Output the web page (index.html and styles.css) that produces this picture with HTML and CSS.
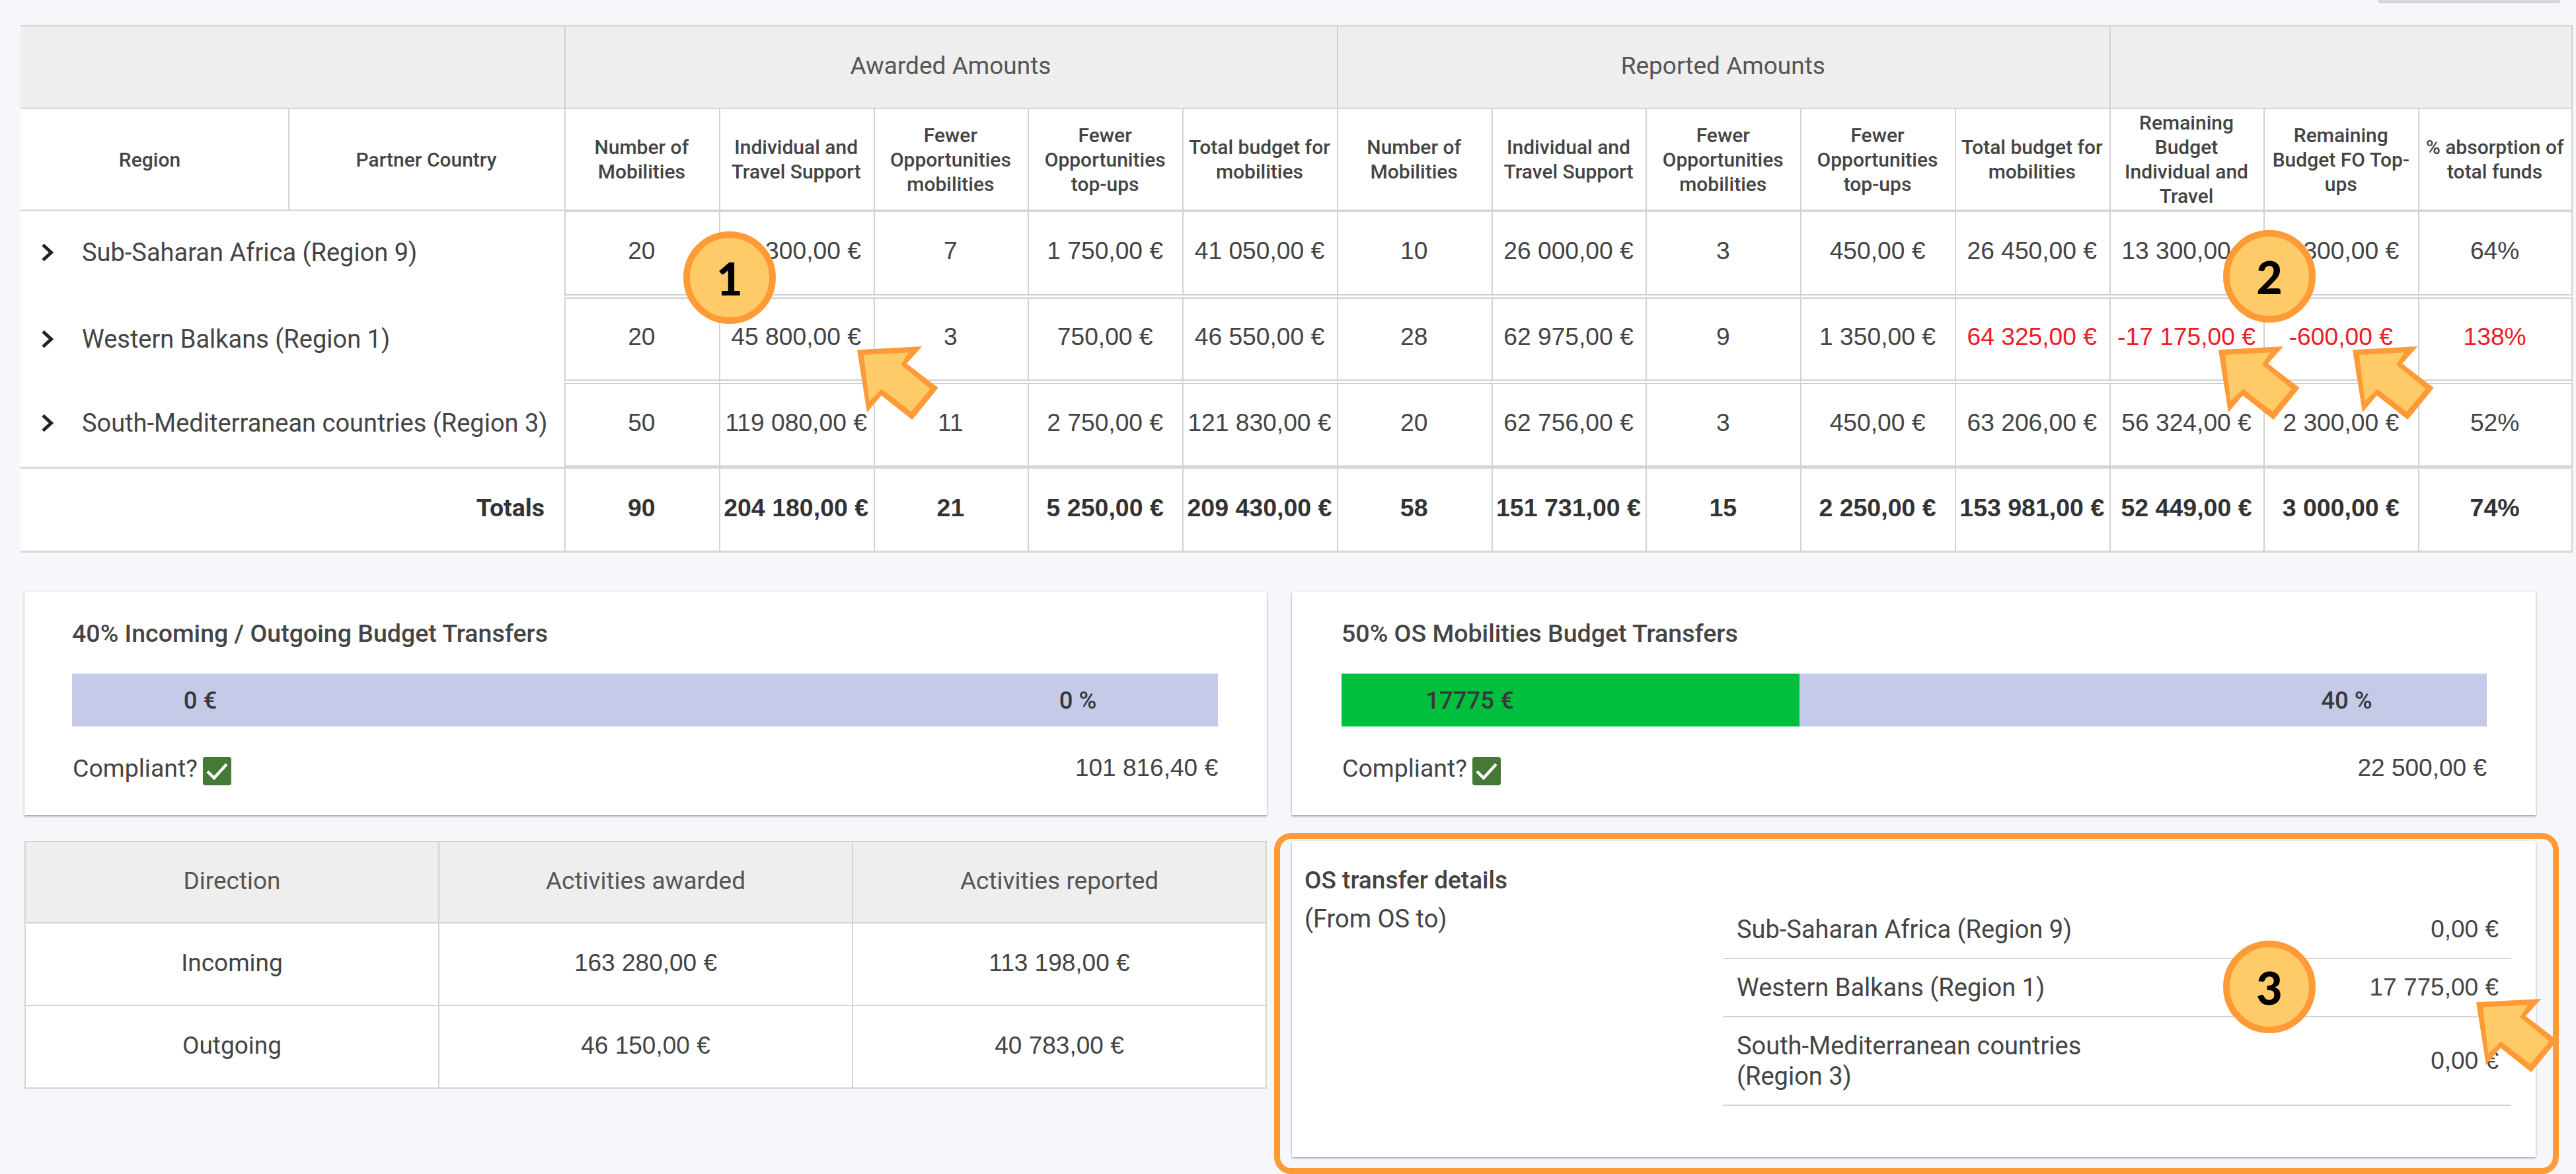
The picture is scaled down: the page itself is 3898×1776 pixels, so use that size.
FILE: index.html
```html
<!DOCTYPE html>
<html lang="en">
<head>
<meta charset="utf-8">
<title>Budget overview</title>
<link rel="stylesheet" href="styles.css">
</head>
<body>
<main class="page">
  <div class="toolbar"><span class="toolbar-button"></span></div>

  <table class="matrix">
    <colgroup>
      <col class="col-region"><col class="col-country">
      <col><col><col><col><col><col><col><col><col><col><col><col><col>
    </colgroup>
    <thead>
      <tr class="group-row">
        <th colspan="2"></th>
        <th colspan="5" class="num">Awarded Amounts</th>
        <th colspan="5" class="num">Reported Amounts</th>
        <th colspan="3" class="num end"></th>
      </tr>
      <tr class="label-row">
        <th class="region-label">Region</th>
        <th class="country-label">Partner Country</th>
        <th class="num">Number of Mobilities</th>
        <th class="num">Individual and Travel Support</th>
        <th class="num">Fewer Opportunities mobilities</th>
        <th class="num">Fewer Opportunities top-ups</th>
        <th class="num">Total budget for mobilities</th>
        <th class="num">Number of Mobilities</th>
        <th class="num">Individual and Travel Support</th>
        <th class="num">Fewer Opportunities mobilities</th>
        <th class="num">Fewer Opportunities top-ups</th>
        <th class="num">Total budget for mobilities</th>
        <th class="num">Remaining Budget Individual and Travel</th>
        <th class="num">Remaining Budget FO Top-ups</th>
        <th class="num end">% absorption of total funds</th>
      </tr>
    </thead>
    <tbody>
      <tr class="data-row first">
        <td colspan="2" class="region"><span class="region-inner"><svg class="chevron" viewBox="0 0 19 28"><path d="M3 2.500 15.500 14 3 25.500"/></svg>Sub-Saharan Africa (Region 9)</span></td>
        <td class="num">20</td><td class="num">39 300,00 €</td><td class="num">7</td><td class="num">1 750,00 €</td><td class="num">41 050,00 €</td>
        <td class="num">10</td><td class="num">26 000,00 €</td><td class="num">3</td><td class="num">450,00 €</td><td class="num">26 450,00 €</td>
        <td class="num">13 300,00 €</td><td class="num">1 300,00 €</td><td class="num end">64%</td>
      </tr>
      <tr class="data-row second">
        <td colspan="2" class="region"><span class="region-inner"><svg class="chevron" viewBox="0 0 19 28"><path d="M3 2.500 15.500 14 3 25.500"/></svg>Western Balkans (Region 1)</span></td>
        <td class="num">20</td><td class="num">45 800,00 €</td><td class="num">3</td><td class="num">750,00 €</td><td class="num">46 550,00 €</td>
        <td class="num">28</td><td class="num">62 975,00 €</td><td class="num">9</td><td class="num">1 350,00 €</td><td class="num over">64 325,00 €</td>
        <td class="num over">-17 175,00 €</td><td class="num over">-600,00 €</td><td class="num end over">138%</td>
      </tr>
      <tr class="data-row last">
        <td colspan="2" class="region"><span class="region-inner"><svg class="chevron" viewBox="0 0 19 28"><path d="M3 2.500 15.500 14 3 25.500"/></svg>South-Mediterranean countries (Region 3)</span></td>
        <td class="num">50</td><td class="num">119 080,00 €</td><td class="num">11</td><td class="num">2 750,00 €</td><td class="num">121 830,00 €</td>
        <td class="num">20</td><td class="num">62 756,00 €</td><td class="num">3</td><td class="num">450,00 €</td><td class="num">63 206,00 €</td>
        <td class="num">56 324,00 €</td><td class="num">2 300,00 €</td><td class="num end">52%</td>
      </tr>
    </tbody>
    <tfoot>
      <tr class="total-row">
        <td colspan="2" class="total-label">Totals</td>
        <td class="num">90</td><td class="num">204 180,00 €</td><td class="num">21</td><td class="num">5 250,00 €</td><td class="num">209 430,00 €</td>
        <td class="num">58</td><td class="num">151 731,00 €</td><td class="num">15</td><td class="num">2 250,00 €</td><td class="num">153 981,00 €</td>
        <td class="num">52 449,00 €</td><td class="num">3 000,00 €</td><td class="num end">74%</td>
      </tr>
    </tfoot>
  </table>

  <section class="lower">
    <article class="card transfer-card">
      <h2 class="card-title">40% Incoming / Outgoing Budget Transfers</h2>
      <div class="bar" style="--pct:0%"><span class="bar-amount">0 €</span><span class="bar-percent">0 %</span></div>
      <div class="compliance">
        <span class="compliant">Compliant?<svg class="tick" viewBox="0 0 43 43"><rect width="43" height="43" rx="4"/><path d="M7 22 17 32 36 11"/></svg></span>
        <span class="limit">101 816,40 €</span>
      </div>
    </article>

    <article class="card transfer-card">
      <h2 class="card-title">50% OS Mobilities Budget Transfers</h2>
      <div class="bar" style="--pct:40%"><span class="bar-amount">17775 €</span><span class="bar-percent">40 %</span></div>
      <div class="compliance">
        <span class="compliant">Compliant?<svg class="tick" viewBox="0 0 43 43"><rect width="43" height="43" rx="4"/><path d="M7 22 17 32 36 11"/></svg></span>
        <span class="limit">22 500,00 €</span>
      </div>
    </article>

    <table class="direction">
      <thead>
        <tr><th>Direction</th><th>Activities awarded</th><th>Activities reported</th></tr>
      </thead>
      <tbody>
        <tr><td class="name">Incoming</td><td>163 280,00 €</td><td>113 198,00 €</td></tr>
        <tr><td class="name">Outgoing</td><td>46 150,00 €</td><td>40 783,00 €</td></tr>
      </tbody>
    </table>

    <article class="card details-card">
      <div class="details-intro">
        <h2 class="details-title">OS transfer details</h2>
        <p class="details-note">(From OS to)</p>
      </div>
      <ul class="details-list">
        <li class="details-row"><span class="details-name">Sub-Saharan Africa (Region 9)</span><span class="details-value">0,00 €</span></li>
        <li class="details-row"><span class="details-name">Western Balkans (Region 1)</span><span class="details-value">17 775,00 €</span></li>
        <li class="details-row"><span class="details-name narrow">South-Mediterranean countries (Region 3)</span><span class="details-value">0,00 €</span></li>
      </ul>
    </article>
  </section>

  <svg class="arrow arrow-a" viewBox="0 0 123 111"><polygon class="arrow-edge" points="0,5.300 98.300,0 75,26 122.700,62.700 83.300,111 36.700,74.300 15,100"/><polygon class="arrow-fill" points="10,12.700 78.300,9.300 66,27.700 110.700,64.300 81.700,98.700 37.300,64.300 18.300,82.700"/></svg>
  <svg class="arrow arrow-b" viewBox="0 0 123 111"><polygon class="arrow-edge" points="0,5.300 98.300,0 75,26 122.700,62.700 83.300,111 36.700,74.300 15,100"/><polygon class="arrow-fill" points="10,12.700 78.300,9.300 66,27.700 110.700,64.300 81.700,98.700 37.300,64.300 18.300,82.700"/></svg>
  <svg class="arrow arrow-c" viewBox="0 0 123 111"><polygon class="arrow-edge" points="0,5.300 98.300,0 75,26 122.700,62.700 83.300,111 36.700,74.300 15,100"/><polygon class="arrow-fill" points="10,12.700 78.300,9.300 66,27.700 110.700,64.300 81.700,98.700 37.300,64.300 18.300,82.700"/></svg>
  <svg class="arrow arrow-d" viewBox="0 0 123 111"><polygon class="arrow-edge" points="0,5.300 98.300,0 75,26 122.700,62.700 83.300,111 36.700,74.300 15,100"/><polygon class="arrow-fill" points="10,12.700 78.300,9.300 66,27.700 110.700,64.300 81.700,98.700 37.300,64.300 18.300,82.700"/></svg>

  <div class="frame"></div>

  <span class="marker marker-1">1</span>
  <span class="marker marker-2">2</span>
  <span class="marker marker-3">3</span>
</main>
</body>
</html>
```

FILE: styles.css
```css
* { box-sizing: border-box; }

html, body {
  margin: 0;
  padding: 0;
  background: #f5f7fb;
}

.page {
  position: relative;
  width: 3898px;
  height: 1776px;
  overflow: hidden;
  font-family: "Roboto", "Liberation Sans", sans-serif;
  color: #444;
}

.toolbar {
  display: flex;
  justify-content: flex-end;
  height: 38px;
  padding-right: 24px;
}

.toolbar-button {
  width: 275px;
  height: 3px;
  background: #d8d8d8;
  border-radius: 0 0 4px 4px;
  box-shadow: 0 1px 2px rgba(0, 0, 0, .25);
}

/* main table */
.matrix {
  width: 3862px;
  margin-left: 31px;
  table-layout: fixed;
  border-collapse: separate;
  border-spacing: 0;
  background: #fff;
}

.col-region { width: 405px; }
.col-country { width: 418px; }

.matrix th, .matrix td { padding: 0 2px 0 0; text-align: center; }

.group-row { height: 127px; }
.group-row th {
  background: #eee;
  border-top: 2px solid #d6d6d6;
  border-bottom: 2px solid #d6d6d6;
  font-size: 37px;
  font-weight: 400;
  color: #555;
  padding-bottom: 4px;
}

.label-row { height: 154px; }
.label-row th {
  border-bottom: 2px solid #d6d6d6;
  font-size: 30px;
  font-weight: 500;
  line-height: 37px;
  color: #444;
  padding: 0 7px 0 5px;
}

.label-row .region-label { padding-right: 19px; }
.label-row .country-label { border-left: 2px solid #d6d6d6; }

.matrix .num { border-left: 2px solid #d2d2d2; }
.matrix .end { border-right: 2px solid #d2d2d2; }

.data-row td {
  font-family: "Liberation Sans", Arial, sans-serif;
  font-size: 37.200px;
  color: #444;
  padding-bottom: 7px;
}
.data-row td.num { border-bottom: 7px double #d0d0d0; }
.data-row.first { height: 133px; }
.data-row.second { height: 129px; }
.data-row.last { height: 125px; }
.data-row.first td.num { border-top: 2px solid #d6d6d6; }
.data-row.last td.num { border-bottom: 2px solid #d6d6d6; }

.data-row td.over { color: #ee1c25; }

.matrix td.region {
  font-family: "Roboto", sans-serif;
  font-size: 38px;
  text-align: left;
  padding-left: 31px;
}
.region-inner { display: flex; align-items: center; gap: 43px; }
.chevron {
  flex: none;
  width: 19px;
  height: 28px;
  fill: none;
  stroke: #222;
  stroke-width: 5;
}

.total-row { height: 130px; }
.total-row td {
  font-family: "Liberation Sans", Arial, sans-serif;
  font-size: 37.500px;
  font-weight: 700;
  color: #333;
  border-top: 3px solid #d6d6d6;
  border-bottom: 3px solid #d6d6d6;
  padding-bottom: 6px;
}
.matrix td.total-label {
  font-family: "Roboto", sans-serif;
  text-align: right;
  padding-right: 30px;
}

/* lower area */
.lower {
  display: grid;
  grid-template-columns: 1880px 1882px;
  column-gap: 38px;
  row-gap: 39px;
  align-items: start;
  margin: 59px 0 0 37px;
}

.card {
  background: #fff;
  box-shadow: 0 2px 3px rgba(0, 0, 0, .32), 0 0 3px rgba(0, 0, 0, .1);
}

.transfer-card {
  display: flex;
  flex-direction: column;
  height: 338px;
  padding: 40px 74px 0 72px;
}
.transfer-card + .transfer-card { padding-left: 75px; }

.card-title {
  margin: 0;
  font-size: 37.500px;
  line-height: 46px;
  font-weight: 500;
  color: #444;
}

.bar {
  display: flex;
  align-items: center;
  justify-content: space-between;
  height: 80px;
  margin-top: 38px;
  background: linear-gradient(to right, #00bf3c var(--pct), #c5cae9 var(--pct));
  font-size: 36.500px;
  font-weight: 500;
  color: #36383e;
}
.bar-amount { width: 388px; text-align: center; }
.bar-percent { width: 424px; text-align: center; }

.compliance {
  display: flex;
  justify-content: space-between;
  align-items: flex-start;
  margin-top: 40px;
  font-size: 37.500px;
  line-height: 46px;
}
.compliant { display: flex; align-items: flex-start; gap: 8px; margin-left: 1px; }
.limit { font-family: "Liberation Sans", Arial, sans-serif; font-size: 37px; }

.tick { width: 43px; height: 43px; margin-top: 6px; }
.tick rect { fill: #447a35; }
.tick path { fill: none; stroke: #fff; stroke-width: 4.500; }

.direction {
  width: 1880px;
  table-layout: fixed;
  border-collapse: collapse;
  background: #fff;
  font-size: 37px;
}
.direction th, .direction td {
  border: 2px solid #d4d4d4;
  text-align: center;
  padding: 0 0 4px;
}
.direction th {
  height: 123px;
  background: #eee;
  font-weight: 400;
  color: #555;
}
.direction td {
  height: 125px;
  font-family: "Liberation Sans", Arial, sans-serif;
  color: #444;
}
.direction td.name { font-family: "Roboto", sans-serif; }

.details-card {
  display: flex;
  height: 478px;
  padding: 37px 37px 0 19px;
}
.details-intro { width: 633px; flex: none; }
.details-title {
  margin: 0;
  font-size: 37px;
  line-height: 46px;
  font-weight: 500;
  color: #444;
}
.details-note { margin: 12px 0 0; font-size: 38px; line-height: 46px; }

.details-list {
  flex: 1;
  list-style: none;
  margin: 54px 0 0;
  padding: 0;
}
.details-row {
  display: flex;
  justify-content: space-between;
  align-items: center;
  padding: 20px 19px 20px 21px;
  border-bottom: 2px solid #d4d4d4;
  font-size: 38px;
  line-height: 46px;
}
.details-name.narrow { width: 560px; }
.details-value { font-family: "Liberation Sans", Arial, sans-serif; font-size: 37px; }

/* annotations lying over the screenshot */
.frame {
  position: absolute;
  left: 1928px;
  top: 1260px;
  width: 1944px;
  height: 516px;
  border: 9px solid #ff9b37;
  border-radius: 26px;
}

.marker {
  position: absolute;
  display: flex;
  align-items: center;
  justify-content: center;
  width: 140px;
  height: 140px;
  border: 10px solid #ff9b37;
  border-radius: 50%;
  background: #ffcb69;
  font-family: "Lato", sans-serif;
  font-size: 68px;
  font-weight: 900;
  color: #000;
}
.marker-1 { left: 1034px; top: 350px; }
.marker-2 { left: 3364px; top: 348px; }
.marker-3 { left: 3364px; top: 1423px; }

.arrow { position: absolute; width: 123px; height: 111px; }
.arrow-edge { fill: #ff9b37; }
.arrow-fill { fill: #ffcb69; }
.arrow-a { left: 1297px; top: 524px; }
.arrow-b { left: 3357px; top: 524px; }
.arrow-c { left: 3560px; top: 524px; }
.arrow-d { left: 3747px; top: 1511px; }
```
